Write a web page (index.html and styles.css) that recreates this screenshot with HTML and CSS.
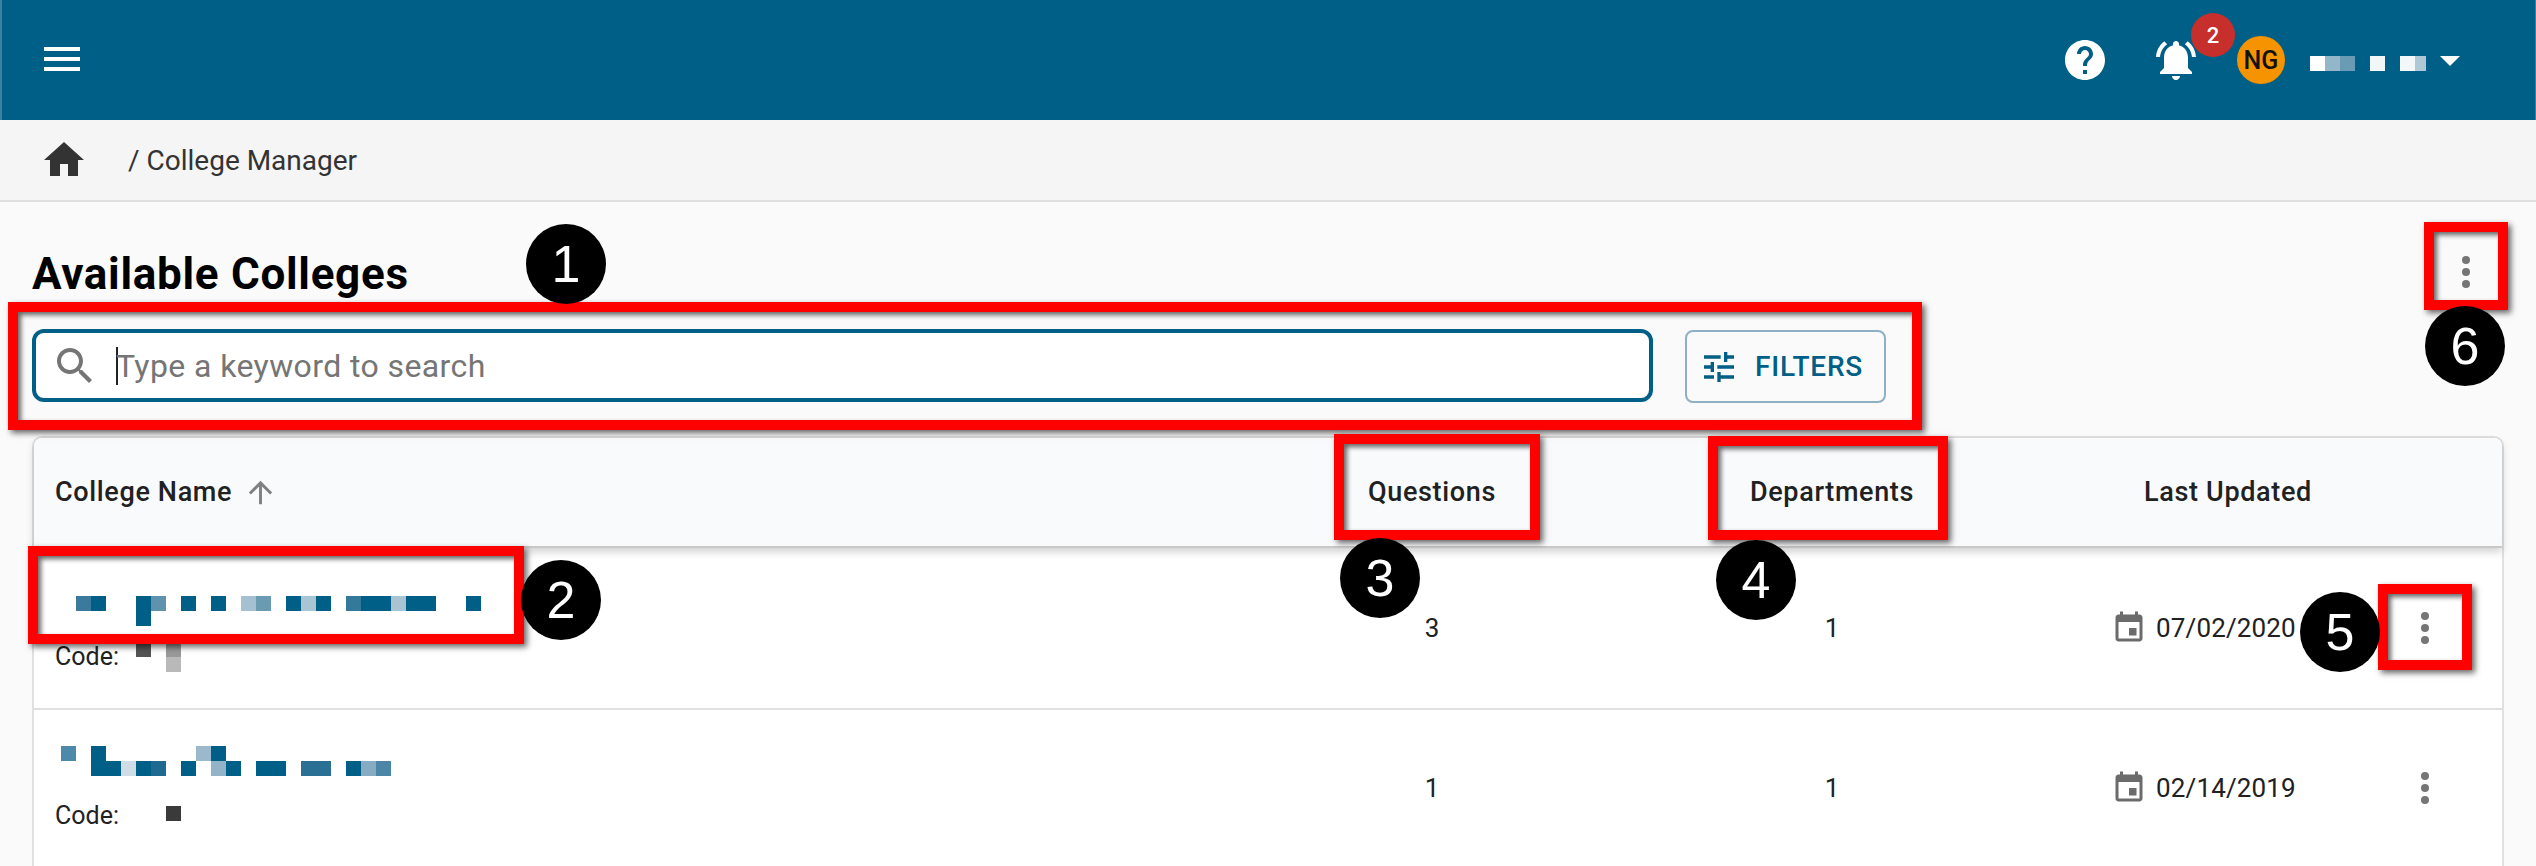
FILE: index.html
```html
<!DOCTYPE html>
<html lang="en">
<head>
<meta charset="utf-8">
<title>College Manager</title>
<link rel="stylesheet" href="styles.css">
</head>
<body>
<div class="page">
  <header class="topbar">
    <button class="menu-btn" aria-label="Menu">
      <svg width="36" height="24" viewBox="0 0 36 24"><rect width="36" height="4" fill="#fff"/><rect y="10" width="36" height="4" fill="#fff"/><rect y="20" width="36" height="4" fill="#fff"/></svg>
    </button>
    <div class="topbar-right">
      <svg class="help-icon" width="48" height="48" viewBox="0 0 24 24"><path fill="#fff" d="M12 2C6.48 2 2 6.48 2 12s4.48 10 10 10 10-4.48 10-10S17.52 2 12 2zm1 17h-2v-2h2v2zm2.07-7.75l-.9.92C13.45 12.9 13 13.5 13 15h-2v-.5c0-1.1.45-2.1 1.17-2.83l1.24-1.26c.37-.36.59-.86.59-1.41 0-1.1-.9-2-2-2s-2 .9-2 2H8c0-2.21 1.79-4 4-4s4 1.79 4 4c0 .88-.36 1.68-.93 2.25z"/></svg>
      <div class="bell">
        <svg width="48" height="48" viewBox="0 0 24 24"><path fill="#fff" d="M7.58 4.08L6.15 2.65C3.75 4.48 2.17 7.3 2.03 10.5h2c.15-2.65 1.51-4.97 3.55-6.42zm12.39 6.42h2c-.15-3.2-1.73-6.02-4.12-7.85l-1.42 1.43c2.02 1.45 3.39 3.77 3.54 6.42zM18 11c0-3.07-1.64-5.64-4.5-6.32V4c0-.83-.67-1.5-1.5-1.5s-1.5.67-1.5 1.5v.68C7.63 5.36 6 7.92 6 11v5l-2 2v1h16v-1l-2-2v-5zm-6 11c.14 0 .27-.01.4-.04.65-.14 1.18-.58 1.44-1.18.1-.24.15-.5.15-.78h-4c.01 1.1.9 2 2.01 2z"/></svg>
        <span class="bell-count">2</span>
      </div>
      <div class="avatar">NG</div>
      <svg class="user-mosaic" width="116" height="15" viewBox="0 0 116 15" shape-rendering="crispEdges">
        <rect x="0" width="15" height="15" fill="#ffffff"/><rect x="15" width="15" height="15" fill="#94b6ca"/><rect x="30" width="15" height="15" fill="#6a9bb5"/>
        <rect x="60" width="15" height="15" fill="#f1f6f9"/>
        <rect x="90" width="15" height="15" fill="#f3f7fa"/><rect x="105" width="11" height="15" fill="#aec8d6"/>
      </svg>
      <svg class="caret" width="20" height="10" viewBox="0 0 20 10"><path fill="#fff" d="M0 0h20L10 10z"/></svg>
    </div>
  </header>

  <nav class="crumbs">
    <svg class="home-icon" width="48" height="48" viewBox="0 0 24 24"><path fill="#333" d="M10 20v-6h4v6h5v-8h3L12 3 2 12h3v8z"/></svg>
    <span class="crumb-text">/ College Manager</span>
  </nav>

  <main class="content">
    <div class="title-row">
      <h1 class="title">Available Colleges</h1>
      <svg class="kebab kebab-page" width="12" height="36" viewBox="0 0 12 36"><circle cx="6" cy="6" r="4"/><circle cx="6" cy="18" r="4"/><circle cx="6" cy="30" r="4"/></svg>
    </div>

    <div class="search-row">
      <div class="search-box">
        <svg width="48" height="48" viewBox="0 0 24 24"><path fill="#757575" d="M15.5 14h-.79l-.28-.27C15.41 12.59 16 11.11 16 9.5 16 5.91 13.09 3 9.5 3S3 5.91 3 9.5 5.91 16 9.5 16c1.61 0 3.09-.59 4.23-1.57l.27.28v.79l5 4.99L20.49 19l-4.99-5zm-6 0C7.01 14 5 11.99 5 9.5S7.01 5 9.5 5 14 7.01 14 9.5 11.99 14 9.5 14z"/></svg>
        <span class="cursor"></span>
        <span class="placeholder">Type a keyword to search</span>
      </div>
      <button class="filters">
        <svg width="40" height="40" viewBox="0 0 24 24"><path fill="#005f86" d="M3 17v2h6v-2H3zM3 5v2h10V5H3zm10 16v-2h8v-2h-8v-2h-2v6h2zM7 9v2H3v2h4v2h2V9H7zm14 4v-2H11v2h10zm-6-4h2V7h4V5h-4V3h-2v6z"/></svg>
        <span>FILTERS</span>
      </button>
    </div>

    <section class="card">
      <div class="grid-row head">
        <div class="cell-name">
          <span>College Name</span>
          <svg width="35" height="35" viewBox="0 0 24 24"><path fill="#808080" d="M4 12l1.41 1.41L11 7.83V20h2V7.83l5.58 5.59L20 12l-8-8-8 8z"/></svg>
        </div>
        <div class="cell-center">Questions</div>
        <div class="cell-center">Departments</div>
        <div class="cell-center cell-updated">Last Updated</div>
        <div></div>
      </div>

      <div class="grid-row row row-first">
        <div class="name-cell">
          <svg class="name-mosaic" width="440" height="30" viewBox="0 0 440 30" shape-rendering="crispEdges">
            <rect x="20" width="15" height="15" fill="#3b7a9c"/><rect x="35" width="15" height="15" fill="#005f86"/>
            <rect x="80" width="15" height="30" fill="#005f86"/><rect x="95" width="15" height="15" fill="#5f92ad"/>
            <rect x="125" width="15" height="15" fill="#005f86"/><rect x="155" width="15" height="15" fill="#005f86"/>
            <rect x="185" width="15" height="15" fill="#a5c0d0"/><rect x="200" width="15" height="15" fill="#6b9ab3"/>
            <rect x="230" width="15" height="15" fill="#005f86"/><rect x="245" width="15" height="15" fill="#a9c4d3"/><rect x="260" width="15" height="15" fill="#005f86"/>
            <rect x="290" width="15" height="15" fill="#34789a"/><rect x="305" width="30" height="15" fill="#005f86"/><rect x="335" width="15" height="15" fill="#a9c3d3"/><rect x="350" width="30" height="15" fill="#005f86"/>
            <rect x="410" width="15" height="15" fill="#005f86"/>
          </svg>
          <div class="code-line">
            <span class="code-label">Code:</span>
            <svg width="45" height="30" viewBox="0 0 45 30" shape-rendering="crispEdges"><rect x="0" width="15" height="15" fill="#555"/><rect x="30" width="15" height="15" fill="#999"/><rect x="30" y="15" width="15" height="15" fill="#b9b9b9"/></svg>
          </div>
        </div>
        <div class="cell-center">3</div>
        <div class="cell-center">1</div>
        <div class="date-cell">
          <svg width="36" height="36" viewBox="0 0 24 24"><path fill="#6b6b6b" d="M17 12h-5v5h5v-5zM16 1v2H8V1H6v2H5c-1.11 0-1.99.9-1.99 2L3 19c0 1.1.89 2 2 2h14c1.1 0 2-.9 2-2V5c0-1.1-.9-2-2-2h-1V1h-2zm3 18H5V8h14v11z"/></svg>
          <span>07/02/2020</span>
        </div>
        <div class="action-cell"><svg class="kebab" width="12" height="36" viewBox="0 0 12 36"><circle cx="6" cy="6" r="4"/><circle cx="6" cy="18" r="4"/><circle cx="6" cy="30" r="4"/></svg></div>
      </div>

      <div class="grid-row row row-second">
        <div class="name-cell">
          <svg class="name-mosaic" width="440" height="30" viewBox="0 0 440 30" shape-rendering="crispEdges">
            <rect x="5" width="15" height="15" fill="#4f89a9"/><rect x="35" width="15" height="15" fill="#005f86"/><rect x="140" width="15" height="15" fill="#9cb9cc"/><rect x="155" width="15" height="15" fill="#005f86"/>
            <rect x="35" y="15" width="30" height="15" fill="#005f86"/><rect x="65" y="15" width="15" height="15" fill="#cfdde6"/><rect x="80" y="15" width="15" height="15" fill="#005f86"/><rect x="95" y="15" width="15" height="15" fill="#1f6a90"/>
            <rect x="125" y="15" width="15" height="15" fill="#005f86"/><rect x="155" y="15" width="15" height="15" fill="#93b4c8"/><rect x="170" y="15" width="15" height="15" fill="#005f86"/>
            <rect x="200" y="15" width="30" height="15" fill="#005f86"/><rect x="245" y="15" width="30" height="15" fill="#2a6f94"/>
            <rect x="290" y="15" width="15" height="15" fill="#005f86"/><rect x="305" y="15" width="15" height="15" fill="#86abc2"/><rect x="320" y="15" width="15" height="15" fill="#4b86a6"/>
          </svg>
          <div class="code-line">
            <span class="code-label">Code:</span>
            <svg width="45" height="30" viewBox="0 0 45 30" shape-rendering="crispEdges"><rect x="30" y="5" width="15" height="15" fill="#3a3a3a"/></svg>
          </div>
        </div>
        <div class="cell-center">1</div>
        <div class="cell-center">1</div>
        <div class="date-cell">
          <svg width="36" height="36" viewBox="0 0 24 24"><path fill="#6b6b6b" d="M17 12h-5v5h5v-5zM16 1v2H8V1H6v2H5c-1.11 0-1.99.9-1.99 2L3 19c0 1.1.89 2 2 2h14c1.1 0 2-.9 2-2V5c0-1.1-.9-2-2-2h-1V1h-2zm3 18H5V8h14v11z"/></svg>
          <span>02/14/2019</span>
        </div>
        <div class="action-cell"><svg class="kebab" width="12" height="36" viewBox="0 0 12 36"><circle cx="6" cy="6" r="4"/><circle cx="6" cy="18" r="4"/><circle cx="6" cy="30" r="4"/></svg></div>
      </div>
    </section>
  </main>

  <div class="mark mark-1"></div>
  <div class="mark mark-2"></div>
  <div class="mark mark-3"></div>
  <div class="mark mark-4"></div>
  <div class="mark mark-5"></div>
  <div class="mark mark-6"></div>
  <div class="num num-1">1</div>
  <div class="num num-2">2</div>
  <div class="num num-3">3</div>
  <div class="num num-4">4</div>
  <div class="num num-5">5</div>
  <div class="num num-6">6</div>
</div>
</body>
</html>
```
FILE: styles.css
```css
* { box-sizing: border-box; }
html, body { margin: 0; padding: 0; }
body { font-family: Roboto, "Liberation Sans", sans-serif; background: #fafafa; color: #212121; }
svg { display: block; flex: none; }
button { font: inherit; background: none; border: 0; padding: 0; }

.page { position: relative; width: 2536px; height: 866px; overflow: hidden; }

.topbar { height: 120px; background: #005f86; border-left: 2px solid #3c7f9f; border-right: 1px solid #3c7f9f; display: flex; align-items: center; justify-content: space-between; padding-left: 42px; }
.menu-btn { margin-top: -2px; }
.topbar-right { display: flex; align-items: center; height: 100%; padding-right: 75px; }
.help-icon { margin-right: 43px; }
.bell { position: relative; width: 48px; height: 48px; margin-right: 37px; }
.bell-count { position: absolute; left: 39px; top: -23px; width: 44px; height: 44px; border-radius: 50%; background: #c62f2b; color: #fff; font-size: 22px; font-weight: 500; display: flex; align-items: center; justify-content: center; }
.avatar { width: 48px; height: 48px; border-radius: 50%; background: #f59300; color: #111; font-size: 25px; font-weight: 500; display: flex; align-items: center; justify-content: center; margin-right: 25px; }
.user-mosaic { margin-top: 7px; margin-right: 14px; }
.caret { margin-top: 2px; }

.crumbs { height: 82px; background: #f5f5f5; border-bottom: 2px solid #e0e0e0; display: flex; align-items: center; padding-left: 40px; }
.home-icon { margin-right: 40px; }
.crumb-text { font-size: 28px; color: #333; }

.content { padding: 0 32px; }
.title-row { height: 127px; display: flex; justify-content: space-between; align-items: flex-start; }
.title { margin: 48px 0 0; font-size: 44px; line-height: 48px; letter-spacing: .7px; font-weight: 700; color: #000; }
.kebab { fill: #757575; }
.kebab-page { margin-top: 52px; margin-right: 32px; }

.search-row { display: flex; align-items: flex-start; gap: 32px; }
.search-box { width: 1621px; height: 73px; border: 4px solid #005f86; border-radius: 12px; background: #fff; display: flex; align-items: center; padding-left: 15px; }
.cursor { width: 2px; height: 38px; background: #222; margin-left: 17px; margin-right: -2px; }
.placeholder { font-size: 32px; letter-spacing: .4px; color: #757575; }
.filters { width: 201px; height: 73px; margin-top: 1px; border: 2px solid #8fb0c4; border-radius: 8px; color: #005f86; font-size: 28px; letter-spacing: .8px; font-weight: 500; display: flex; align-items: center; padding-left: 12px; gap: 16px; }

.card { margin-top: 33px; background: #fff; border: 2px solid #e0e0e0; border-bottom: 0; border-radius: 10px 10px 0 0; width: 2472px; }
.grid-row { display: grid; grid-template-columns: 1201px 394px 406px 350px 80px 1fr; align-items: center; }
.head { height: 110px; background: #f9fafc; border-bottom: 2px solid #c8c8c8; box-shadow: 0 4px 8px rgba(0,0,0,.18); border-radius: 8px 8px 0 0; font-size: 27px; letter-spacing: .65px; font-weight: 500; position: relative; }
.cell-name { display: flex; align-items: center; gap: 11px; padding-left: 21px; }
.cell-center { text-align: center; }
.cell-updated { padding-left: 36px; white-space: nowrap; }
.row { font-size: 26px; align-items: center; }
.row-first { height: 162px; border-bottom: 2px solid #e0e0e0; }
.row-second { height: 156px; }
.name-cell { align-self: start; padding-left: 22px; }
.row-first .name-cell { padding-top: 48px; }
.row-second .name-cell { padding-top: 36px; }
.row-first .code-line { margin-top: 16px; }
.row-second .code-line { margin-top: 25px; }
.code-line { display: flex; height: 30px; align-items: flex-start; }
.code-label { width: 80px; font-size: 25px; line-height: 30px; margin-left: -1px; margin-right: 1px; }
.date-cell { display: flex; align-items: center; padding-left: 76px; gap: 9px; font-size: 26px; letter-spacing: .15px; }
.action-cell { display: flex; justify-content: center; }

.mark { position: absolute; border: 10px solid #f00; box-shadow: 3px 3px 6px rgba(0,0,0,.6), inset 3px 3px 5px rgba(0,0,0,.6); }
.mark-1 { left: 8px; top: 302px; width: 1914px; height: 128px; }
.mark-2 { left: 28px; top: 546px; width: 496px; height: 98px; }
.mark-3 { left: 1334px; top: 434px; width: 206px; height: 106px; }
.mark-4 { left: 1708px; top: 436px; width: 240px; height: 104px; }
.mark-5 { left: 2378px; top: 584px; width: 94px; height: 86px; }
.mark-6 { left: 2424px; top: 222px; width: 84px; height: 88px; }

.num { position: absolute; width: 80px; height: 80px; border-radius: 50%; background: #000; color: #fff; font-family: "Liberation Sans", sans-serif; font-size: 52px; display: flex; align-items: center; justify-content: center; }
.num-1 { left: 526px; top: 224px; }
.num-2 { left: 521px; top: 560px; }
.num-3 { left: 1340px; top: 538px; }
.num-4 { left: 1716px; top: 540px; }
.num-5 { left: 2300px; top: 592px; }
.num-6 { left: 2425px; top: 306px; }
```
